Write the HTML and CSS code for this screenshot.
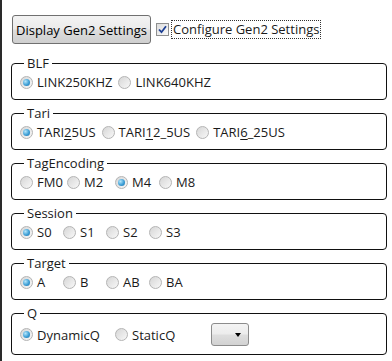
FILE: index.html
```html
<!DOCTYPE html>
<html>
  <head>
    <meta charset="utf-8">
    <title>Gen2 Settings</title>
    <link rel="stylesheet" href="styles.css">
  </head>
  <body>
    <div class="panel">
      <!-- Top bar -->
      <div class="toolbar">
        <button class="btn">Display Gen2 Settings</button>
        <label class="check">
          <span class="box">
            <svg width="9" height="9" viewBox="0 0 9 9">
              <path d="M1 4.5 L3.5 7.2 L8 1.2" fill="none" stroke="#1c3f94" stroke-width="1.8"/>
            </svg>
          </span>
          <span class="focus">Configure Gen2 Settings</span>
        </label>
      </div>

      <fieldset class="group">
        <legend>BLF</legend>
        <div class="options">
          <span class="opt"><span class="radio on"></span>LINK250KHZ</span>
          <span class="opt"><span class="radio"></span>LINK640KHZ</span>
        </div>
      </fieldset>

      <fieldset class="group">
        <legend>Tari</legend>
        <div class="options">
          <span class="opt"><span class="radio on"></span>TARI<u>2</u>5US</span>
          <span class="opt"><span class="radio"></span>TARI<u>1</u>2_5US</span>
          <span class="opt"><span class="radio"></span>TARI<u>6</u>_25US</span>
        </div>
      </fieldset>

      <fieldset class="group">
        <legend>TagEncoding</legend>
        <div class="options grid encoding">
          <span class="opt"><span class="radio"></span>FM0</span>
          <span class="opt"><span class="radio"></span>M2</span>
          <span class="opt"><span class="radio on"></span>M4</span>
          <span class="opt"><span class="radio"></span>M8</span>
        </div>
      </fieldset>

      <fieldset class="group">
        <legend>Session</legend>
        <div class="options grid">
          <span class="opt"><span class="radio on"></span>S0</span>
          <span class="opt"><span class="radio"></span>S1</span>
          <span class="opt"><span class="radio"></span>S2</span>
          <span class="opt"><span class="radio"></span>S3</span>
        </div>
      </fieldset>

      <fieldset class="group">
        <legend>Target</legend>
        <div class="options grid">
          <span class="opt"><span class="radio on"></span>A</span>
          <span class="opt"><span class="radio"></span>B</span>
          <span class="opt"><span class="radio"></span>AB</span>
          <span class="opt"><span class="radio"></span>BA</span>
        </div>
      </fieldset>

      <fieldset class="group">
        <legend>Q</legend>
        <div class="options grid qrow">
          <span class="opt"><span class="radio on"></span>DynamicQ</span>
          <span class="opt"><span class="radio"></span>StaticQ</span>
          <span class="combo"><span class="arrow"></span></span>
        </div>
      </fieldset>
    </div>
  </body>
</html>
```

FILE: styles.css
```css
body, html {
  margin: 0;
  padding: 0;
  height: 100%;
  background-color: #fff;
  font-family: "Open Sans", "Noto Sans", Arial, sans-serif;
  font-size: 13px;
  color: #1a1a1a;
}

.panel {
  height: 100%;
  box-sizing: border-box;
  border-left: 2px solid #2a2a2a;
  padding: 15px 5px 0 9px;
}

/* Top bar */
.toolbar {
  display: flex;
  align-items: center;
  margin-left: 1px;
  margin-bottom: 10px;
}

.btn {
  height: 29px;
  padding: 0 3px;
  font-family: inherit;
  font-size: 13px;
  color: #000;
  border: 1px solid #707070;
  border-radius: 3px;
  background: linear-gradient(#f3f3f3 0%, #ebebeb 48%, #dddddd 52%, #cfcfcf 100%);
}

.check {
  display: flex;
  align-items: center;
  margin-left: 5px;
}

.box {
  width: 11px;
  height: 11px;
  border: 1px solid #8e8f8f;
  background: linear-gradient(135deg, #dcdcdc, #fbfbfb);
  display: flex;
  align-items: center;
  justify-content: center;
}

.focus {
  margin-left: 2px;
  padding: 0 1px;
  line-height: 17px;
  border: 1px dotted #333;
}

/* Group boxes */
.group {
  margin: 0 0 4px 0;
  padding: 1px 8px 8px 8px;
  border: 1px solid #111;
  border-radius: 4px;
}

.group legend {
  padding: 0 3px;
  margin-left: 4px;
  line-height: 18px;
}

.options {
  display: flex;
  align-items: center;
  gap: 6px;
  height: 18px;
}

.options.grid {
  display: grid;
  grid-template-columns: 43px 43px 43px auto;
  gap: 0;
}

.options.encoding {
  grid-template-columns: 47px 48px 44px auto;
}

.options.qrow {
  grid-template-columns: 95px 96px auto;
  height: 23px;
}

.opt {
  display: flex;
  align-items: center;
  white-space: nowrap;
}

.opt u {
  text-decoration-thickness: 1px;
  text-underline-offset: 2px;
}

/* Aero style radio */
.radio {
  position: relative;
  width: 11px;
  height: 11px;
  margin-right: 4px;
  border: 1px solid #b4b4b4;
  border-radius: 50%;
  background: linear-gradient(135deg, #d6d6d6, #f8f8f8);
}

.radio.on::after {
  content: "";
  position: absolute;
  left: 2px;
  top: 2px;
  width: 7px;
  height: 7px;
  border-radius: 50%;
  background: radial-gradient(circle at 35% 35%, #b5e6fb 0%, #3d9fd6 55%, #1d6ea8 100%);
}

/* Empty dropdown */
.combo {
  position: relative;
  width: 36px;
  height: 21px;
  border: 1px solid #8c8c8c;
  border-radius: 3px;
  background: linear-gradient(#f4f4f4 0%, #ececec 48%, #dedede 52%, #d2d2d2 100%);
}

.arrow {
  position: absolute;
  right: 7px;
  top: 9px;
  border-left: 3.5px solid transparent;
  border-right: 3.5px solid transparent;
  border-top: 4px solid #000;
}
```
